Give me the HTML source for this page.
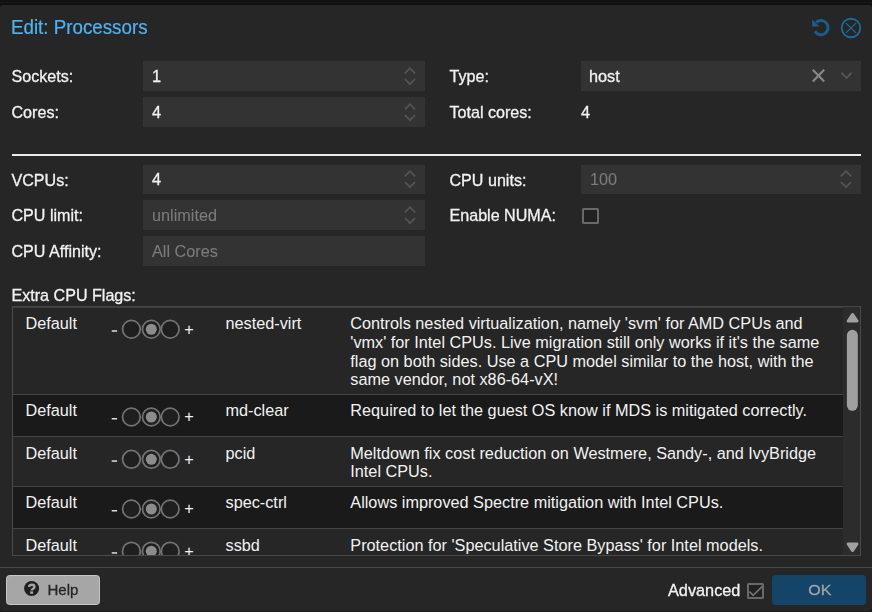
<!DOCTYPE html>
<html>
<head>
<meta charset="utf-8">
<title>Edit: Processors</title>
<style>
*{box-sizing:border-box;margin:0;padding:0}
html,body{width:872px;height:612px;overflow:hidden;background:#121212;}
#band1{position:absolute;left:0;top:2px;width:872px;height:1px;background:#181818}
#band2{position:absolute;left:0;top:3px;width:872px;height:2px;background:#0f0f0f}
body{font-family:"Liberation Sans",sans-serif;font-size:16.25px;color:#f2f2f2;position:relative}
#win{position:absolute;left:0;top:4.5px;width:872px;height:606.3px;background:#262626;border-radius:3px 3px 3px 2px;}
#pg{position:absolute;left:0;top:0;width:872px;height:612px;overflow:hidden}
.abs{position:absolute}
.gs{position:absolute;left:0;top:0;width:872px;height:612px;will-change:transform;-webkit-text-stroke:0.3px}
.title{left:11px;top:16.3px;font-size:18.75px;color:#4eb3f3;line-height:22px;white-space:nowrap;transform:scaleY(1.06);transform-origin:0 0;-webkit-text-stroke:0.2px}
.lbl{position:absolute;margin-left:-0.5px;font-size:16.1px;line-height:20px;white-space:nowrap;color:#f2f2f2}
.inp{position:absolute;height:30px;background:#333333;line-height:30px;padding-left:9px;white-space:nowrap;color:#f2f2f2}
.inp.dis{color:#7b7b7b;-webkit-text-stroke:0.1px}
.val{position:absolute;line-height:20px}
svg{position:absolute;overflow:visible}
.sep{position:absolute;left:12px;top:154px;width:849px;height:2px;background:#ebebeb}
#grid{position:absolute;left:12px;top:306px;width:849px;height:249.5px;border:1px solid #4a4a4a;border-top:1px solid #454545}
#hl{position:absolute;left:13px;top:307px;width:830px;height:1px;background:#3e3e3e}
#clip{position:absolute;left:0;top:0;width:872px;height:554.5px;overflow:hidden}
.row{position:absolute;left:13px;width:830px;border-bottom:1px solid #444}
.row.alt{background:#1a1a1a}
.ct{position:absolute;line-height:19px;white-space:nowrap}
.pm{position:absolute;line-height:19px;white-space:nowrap}
#sb{position:absolute;left:843px;top:307px;width:17px;height:247.5px;background:#2c2c2c}
#tbl{position:absolute;left:0;top:567px;width:872px;height:1px;background:#484848}
.btn{position:absolute;height:30px;border-radius:3.5px;line-height:30px;white-space:nowrap;font-size:15px}
</style>
</head>
<body>
<div id="band1"></div><div id="band2"></div><div class="abs" style="left:0;top:610.8px;width:872px;height:1.2px;background:#1b1b1b"></div>
<div id="win"></div>
<div id="pg">
  <div id="clip">
  <div class="row" style="top:308px;height:87px"></div>
<div class="ct" style="left:25.5px;top:314px">Default</div><div class="ct" style="left:225.5px;top:314px">nested-virt</div><div class="ct" style="left:350.3px;top:314px">Controls nested virtualization, namely 'svm' for AMD CPUs and</div>
<div class="ct" style="left:350.3px;top:333px">'vmx' for Intel CPUs. Live migration still only works if it's the same</div>
<div class="ct" style="left:350.3px;top:352px">flag on both sides. Use a CPU model similar to the host, with the</div>
<div class="ct" style="left:350.3px;top:370px">same vendor, not x86-64-vX!</div>
<div class="pm" style="left:184.3px;top:320.05px">+</div><svg style="left:110px;top:318px" width="72" height="24" viewBox="0 0 72 24"><rect x="1.7" y="12.25" width="5.4" height="1.5" fill="#dedede"/><circle cx="21.4" cy="11.25" r="8.85" fill="#1f1f1f" stroke="#747474" stroke-width="1.7"/><circle cx="41.3" cy="11.25" r="8.85" fill="#1f1f1f" stroke="#747474" stroke-width="1.7"/><circle cx="41.3" cy="11.25" r="5.5" fill="#8c8c8c"/><circle cx="60.2" cy="11.25" r="8.85" fill="#1f1f1f" stroke="#747474" stroke-width="1.7"/></svg>
<div class="row alt" style="top:395px;height:42px"></div>
<div class="ct" style="left:25.5px;top:401px">Default</div><div class="ct" style="left:225.5px;top:401px">md-clear</div><div class="ct" style="left:350.3px;top:401px">Required to let the guest OS know if MDS is mitigated correctly.</div>
<div class="pm" style="left:184.3px;top:406.8px">+</div><svg style="left:110px;top:406px" width="72" height="24" viewBox="0 0 72 24"><rect x="1.7" y="12" width="5.4" height="1.5" fill="#dedede"/><circle cx="21.4" cy="11" r="8.85" fill="#1f1f1f" stroke="#747474" stroke-width="1.7"/><circle cx="41.3" cy="11" r="8.85" fill="#1f1f1f" stroke="#747474" stroke-width="1.7"/><circle cx="41.3" cy="11" r="5.5" fill="#8c8c8c"/><circle cx="60.2" cy="11" r="8.85" fill="#1f1f1f" stroke="#747474" stroke-width="1.7"/></svg>
<div class="row" style="top:437px;height:50px"></div>
<div class="ct" style="left:25.5px;top:444px">Default</div><div class="ct" style="left:225.5px;top:444px">pcid</div><div class="ct" style="left:350.3px;top:444px">Meltdown fix cost reduction on Westmere, Sandy-, and IvyBridge</div>
<div class="ct" style="left:350.3px;top:462px">Intel CPUs.</div>
<div class="pm" style="left:184.3px;top:450.1px">+</div><svg style="left:110px;top:448px" width="72" height="24" viewBox="0 0 72 24"><rect x="1.7" y="12.3" width="5.4" height="1.5" fill="#dedede"/><circle cx="21.4" cy="11.3" r="8.85" fill="#1f1f1f" stroke="#747474" stroke-width="1.7"/><circle cx="41.3" cy="11.3" r="8.85" fill="#1f1f1f" stroke="#747474" stroke-width="1.7"/><circle cx="41.3" cy="11.3" r="5.5" fill="#8c8c8c"/><circle cx="60.2" cy="11.3" r="8.85" fill="#1f1f1f" stroke="#747474" stroke-width="1.7"/></svg>
<div class="row alt" style="top:487px;height:42px"></div>
<div class="ct" style="left:25.5px;top:493px">Default</div><div class="ct" style="left:225.5px;top:493px">spec-ctrl</div><div class="ct" style="left:350.3px;top:493px">Allows improved Spectre mitigation with Intel CPUs.</div>
<div class="pm" style="left:184.3px;top:498.8px">+</div><svg style="left:110px;top:498px" width="72" height="24" viewBox="0 0 72 24"><rect x="1.7" y="12" width="5.4" height="1.5" fill="#dedede"/><circle cx="21.4" cy="11" r="8.85" fill="#1f1f1f" stroke="#747474" stroke-width="1.7"/><circle cx="41.3" cy="11" r="8.85" fill="#1f1f1f" stroke="#747474" stroke-width="1.7"/><circle cx="41.3" cy="11" r="5.5" fill="#8c8c8c"/><circle cx="60.2" cy="11" r="8.85" fill="#1f1f1f" stroke="#747474" stroke-width="1.7"/></svg>
<div class="row" style="top:529px;height:42px"></div>
<div class="ct" style="left:25.5px;top:536px">Default</div><div class="ct" style="left:225.5px;top:536px">ssbd</div><div class="ct" style="left:350.3px;top:536px">Protection for 'Speculative Store Bypass' for Intel models.</div>
<div class="pm" style="left:184.3px;top:542px">+</div><svg style="left:110px;top:540px" width="72" height="24" viewBox="0 0 72 24"><rect x="1.7" y="12.2" width="5.4" height="1.5" fill="#dedede"/><circle cx="21.4" cy="11.2" r="8.85" fill="#1f1f1f" stroke="#747474" stroke-width="1.7"/><circle cx="41.3" cy="11.2" r="8.85" fill="#1f1f1f" stroke="#747474" stroke-width="1.7"/><circle cx="41.3" cy="11.2" r="5.5" fill="#8c8c8c"/><circle cx="60.2" cy="11.2" r="8.85" fill="#1f1f1f" stroke="#747474" stroke-width="1.7"/></svg>

  </div>
  <div id="sb"></div>
  <svg style="left:843px;top:308px" width="17" height="247" viewBox="0 0 17 247">
    <path d="M9.6 6.4 L5.05 13.1 L14.15 13.1 Z" fill="#a0a0a0" stroke="#a0a0a0" stroke-width="2.8" stroke-linejoin="round"/>
    <rect x="3.9" y="21.8" width="10.9" height="81" rx="5.45" fill="#a0a0a0"/>
    <path d="M5.05 235.9 L14.05 235.9 L9.55 242.6 Z" fill="#a0a0a0" stroke="#a0a0a0" stroke-width="2.8" stroke-linejoin="round"/>
  </svg>
  <div id="grid"></div><div id="hl"></div>

 <div class="gs">
  <div class="abs title">Edit: Processors</div>

  <!-- header tools -->
  <svg style="left:0;top:0" width="872" height="60" viewBox="0 0 872 60">
    <path d="M816.2 22.4 A7.1 7.1 0 1 1 815.0 31.4" fill="none" stroke="#1a5d8d" stroke-width="3"/>
    <path d="M812.1 19.6 L812.1 26.4 L819.6 26.4 Z" fill="#1a5d8d"/>
    <circle cx="851" cy="28" r="9.3" fill="none" stroke="#1b6a98" stroke-width="1.9"/>
    <path d="M846 23.1 L856 32.9 M856 23.1 L846 32.9" stroke="#1b6a98" stroke-width="1.3" fill="none"/>
  </svg>

  <!-- top form -->
  <div class="lbl" style="left:12px;top:66px">Sockets:</div>
  <div class="inp" style="left:143px;top:61px;width:282px">1</div>
  <div class="lbl" style="left:12px;top:102px">Cores:</div>
  <div class="inp" style="left:143px;top:97px;width:282px">4</div>

  <div class="lbl" style="left:450px;top:66px">Type:</div>
  <div class="inp" style="left:581px;top:61px;width:280px;padding-left:8px">host</div>
  <div class="lbl" style="left:450px;top:102px">Total cores:</div>
  <div class="val" style="left:581px;top:102px">4</div>

  <div class="sep"></div>

  <div class="lbl" style="left:12px;top:170px">VCPUs:</div>
  <div class="inp" style="left:143px;top:165px;width:282px;height:29px;line-height:29.5px">4</div>
  <div class="lbl" style="left:12px;top:205px">CPU limit:</div>
  <div class="inp dis" style="left:143px;top:200px;width:282px">unlimited</div>
  <div class="lbl" style="left:12px;top:241px">CPU Affinity:</div>
  <div class="inp dis" style="left:143px;top:236px;width:282px">All Cores</div>

  <div class="lbl" style="left:450px;top:170px">CPU units:</div>
  <div class="inp dis" style="left:581px;top:165px;width:280px;height:29px;line-height:29.5px">100</div>
  <div class="lbl" style="left:450px;top:205px">Enable NUMA:</div>
  <div class="abs" style="left:582px;top:208px;width:17px;height:16px;border:2px solid #696969;border-radius:1.5px;background:#212121"></div>

  <!-- spinners -->
  <svg style="left:404px;top:66px" width="12" height="20" viewBox="0 0 12 20"><path d="M0.9 7.3 L6 2.1 L11.1 7.3 M0.9 13.0 L6 18.2 L11.1 13.0" fill="none" stroke="#555555" stroke-width="1.7"/></svg>
  <svg style="left:404px;top:102px" width="12" height="20" viewBox="0 0 12 20"><path d="M0.9 7.3 L6 2.1 L11.1 7.3 M0.9 13.0 L6 18.2 L11.1 13.0" fill="none" stroke="#555555" stroke-width="1.7"/></svg>
  <svg style="left:404px;top:169.3px" width="12" height="20" viewBox="0 0 12 20"><path d="M0.9 7.3 L6 2.1 L11.1 7.3 M0.9 13.0 L6 18.2 L11.1 13.0" fill="none" stroke="#555555" stroke-width="1.7"/></svg>
  <svg style="left:404px;top:205px" width="12" height="20" viewBox="0 0 12 20"><path d="M0.9 7.3 L6 2.1 L11.1 7.3 M0.9 13.0 L6 18.2 L11.1 13.0" fill="none" stroke="#555555" stroke-width="1.7"/></svg>
  <svg style="left:840px;top:169.3px" width="12" height="20" viewBox="0 0 12 20"><path d="M0.9 7.3 L6 2.1 L11.1 7.3 M0.9 13.0 L6 18.2 L11.1 13.0" fill="none" stroke="#555555" stroke-width="1.7"/></svg>

  <!-- combobox triggers -->
  <svg style="left:812px;top:69.1px" width="13" height="13" viewBox="0 0 13 13"><path d="M0.8 0.8 L12.2 12.4 M12.2 0.8 L0.8 12.4" stroke="#878787" stroke-width="2.2" fill="none"/></svg>
  <svg style="left:840.6px;top:72px" width="11" height="7" viewBox="0 0 11 7"><path d="M0.5 0.7 L5.5 6.0 L10.5 0.7" stroke="#585858" stroke-width="1.7" fill="none"/></svg>

  <div class="lbl" style="left:12px;top:284.6px">Extra CPU Flags:</div>
 </div>

  <div class="gs">
  <div id="tbl"></div>
  <div class="btn" style="left:6px;top:575px;width:94px;background:#a6a6a6;color:#262626;border:1px solid #c6c6c6"></div>
  <svg style="left:24px;top:581px" width="15" height="15" viewBox="0 0 15 15">
    <circle cx="7.6" cy="7.5" r="7.5" fill="#1f1f1f"/>
    <path d="M5.1 5.9 C5.1 3.0 10.5 3.0 10.5 6.0 C10.5 7.9 7.7 7.5 7.7 9.5" fill="none" stroke="#a6a6a6" stroke-width="2.3"/>
    <rect x="6.2" y="10.4" width="2.9" height="2.4" fill="#a6a6a6"/>
  </svg>
  <div class="abs" style="left:47.5px;top:580px;line-height:20px;font-size:15px;color:#262626">Help</div>
  <div class="lbl" style="left:668.5px;top:580px;font-size:16.3px">Advanced</div>
  <div class="abs" style="left:747px;top:583px;width:17px;height:16px;border:2px solid #696969;border-radius:1.5px;background:#212121"></div>
  <svg style="left:0;top:560px" width="872" height="52" viewBox="0 560 872 52"><path d="M749.4 591.6 L753.2 595.4 L762.9 585.9" fill="none" stroke="#737373" stroke-width="1.7"/></svg>
  <div class="btn" style="left:772px;top:575px;width:94px;background:#144468;color:#a3a3a3;text-align:center;padding-left:1px;font-size:15px"><span style="display:inline-block;transform:scaleX(1.065)">OK</span></div>
  </div>
</div>
</body>
</html>
